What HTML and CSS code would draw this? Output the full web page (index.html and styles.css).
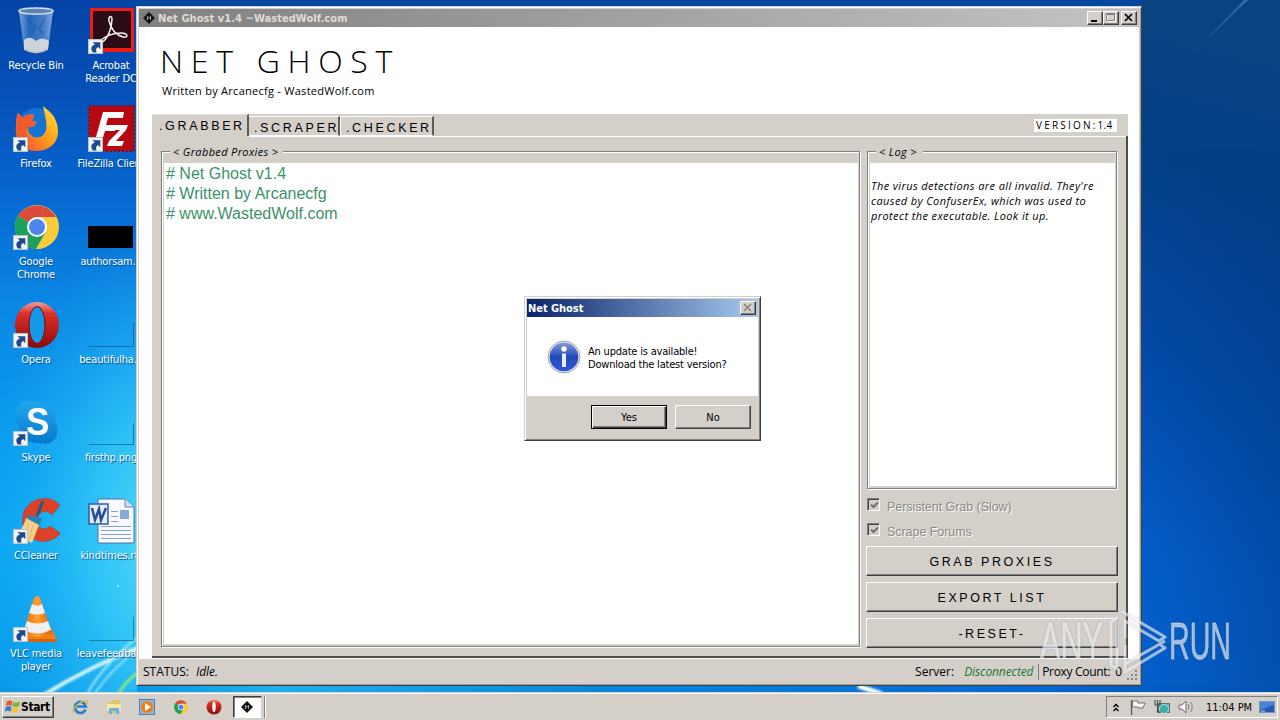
FILE: index.html
```html
<!DOCTYPE html>
<html lang="en">
<head>
<meta charset="utf-8">
<title>Net Ghost</title>
<link rel="stylesheet" href="styles.css">
</head>
<body>
<svg class="defs" width="0" height="0">
  <defs>
    <linearGradient id="red" x1="0" y1="0" x2="0" y2="1"><stop offset="0" stop-color="#f4a09a"/><stop offset=".25" stop-color="#dc3028"/><stop offset="1" stop-color="#8c0a08"/></linearGradient>
    <linearGradient id="fox" x1="1" y1="0" x2="0" y2="1"><stop offset="0" stop-color="#ffe838"/><stop offset=".5" stop-color="#ff9a18"/><stop offset="1" stop-color="#f0403c"/></linearGradient>
    <linearGradient id="sky" x1="0" y1="0" x2="0" y2="1"><stop offset="0" stop-color="#20a8ee"/><stop offset="1" stop-color="#0878cc"/></linearGradient>
    <linearGradient id="glass" x1="0" y1="0" x2="1" y2="0"><stop offset="0" stop-color="#a8c8ec" stop-opacity=".75"/><stop offset=".3" stop-color="#4080c8" stop-opacity=".55"/><stop offset=".75" stop-color="#78a4dc" stop-opacity=".6"/><stop offset="1" stop-color="#c0d8f0" stop-opacity=".7"/></linearGradient>
    <linearGradient id="info" x1="0" y1="0" x2="0" y2="1"><stop offset="0" stop-color="#7c98e0"/><stop offset=".5" stop-color="#2448b8"/><stop offset="1" stop-color="#2c58d8"/></linearGradient>
    <linearGradient id="cone" x1="0" y1="0" x2="1" y2="0"><stop offset="0" stop-color="#e86808"/><stop offset=".5" stop-color="#ffa030"/><stop offset="1" stop-color="#e06008"/></linearGradient>
    <symbol id="arrow" viewBox="0 0 14 14"><rect width="14" height="14" fill="#f4f4f4"/><rect x=".5" y=".5" width="13" height="13" fill="none" stroke="#b8c4cc"/><path d="M4 3H11.500V9.500L9.500 7.500C7.500 8.500 7 10 8 12.500H4.500C2 9 3 6.500 6.500 5.200Z" fill="#1c4a8c"/></symbol>
    <symbol id="chrome" viewBox="0 0 44 44"><circle cx="22" cy="22" r="22" fill="#fbcb3c"/><path d="M22 22L3 11A22 22 0 0 1 41 12H22Z" fill="#dc4a3c"/><path d="M3 11A22 22 0 0 0 21 44L31 27L22 22Z" fill="#1da05c"/><path d="M22 12H41A22 22 0 0 1 21 44L31 27Z" fill="#fbcb3c"/><circle cx="22" cy="22" r="10" fill="#fff"/><circle cx="22" cy="22" r="8" fill="#4c86ec"/></symbol>
    <symbol id="ghost" viewBox="0 0 12 12"><path d="M6 0L12 6L6 12L0 6Z" fill="#141414"/><path d="M4.500 4v4M4.500 6L7.500 5.500M7.500 4v4" stroke="#bbb" stroke-width=".8"/></symbol>
  </defs>
</svg>

<svg class="wallpaper" width="1280" height="720" viewBox="0 0 1280 720">
  <defs>
    <linearGradient id="wl" x1="0" y1="0" x2="0" y2="1"><stop offset="0" stop-color="#0544a6"/><stop offset=".13" stop-color="#0650b8"/><stop offset=".28" stop-color="#066ad2"/><stop offset=".42" stop-color="#0a86e4"/><stop offset=".58" stop-color="#0a9aee"/><stop offset=".75" stop-color="#0ca8f4"/><stop offset="1" stop-color="#0898e8"/></linearGradient>
    <radialGradient id="glow" gradientUnits="userSpaceOnUse" cx="170" cy="545" r="320" gradientTransform="translate(170 545) scale(.58 1) translate(-170 -545)"><stop offset="0" stop-color="#5ce0fa"/><stop offset=".45" stop-color="#38ccf8" stop-opacity=".7"/><stop offset="1" stop-color="#20a8f0" stop-opacity="0"/></radialGradient>
    <linearGradient id="wr" gradientUnits="userSpaceOnUse" x1="1275" y1="60" x2="1130" y2="640"><stop offset="0" stop-color="#0a4282"/><stop offset=".2" stop-color="#033e86"/><stop offset=".5" stop-color="#0249a4"/><stop offset=".85" stop-color="#035cc8"/><stop offset="1" stop-color="#0460cc"/></linearGradient>
    <linearGradient id="shade" x1="0" y1="0" x2="1" y2="0"><stop offset="0" stop-color="#003880" stop-opacity="0"/><stop offset="1" stop-color="#003880" stop-opacity=".4"/></linearGradient>
    <linearGradient id="base" x1="0" y1="0" x2="1" y2="0"><stop offset="0" stop-color="#0898e8"/><stop offset=".12" stop-color="#20b0ec"/><stop offset=".4" stop-color="#0888dc"/><stop offset=".8" stop-color="#0468d0"/><stop offset="1" stop-color="#0450b0"/></linearGradient>
    <linearGradient id="ray" x1="0" y1="1" x2="1" y2="0"><stop offset="0" stop-color="#6aa4d8" stop-opacity="0"/><stop offset="1" stop-color="#7ab0e0" stop-opacity=".4"/></linearGradient>
    <filter id="soft"><feGaussianBlur stdDeviation="1.200"/></filter>
  </defs>
  <rect width="1280" height="720" fill="#0470cc"/>
  <rect width="700" height="720" fill="url(#wl)"/>
  <rect width="400" height="720" fill="url(#glow)"/>
  <rect x="700" width="580" height="720" fill="url(#wr)"/>
  <rect x="1142" y="150" width="138" height="570" fill="url(#shade)"/>
  <rect x="136" width="1006" height="8" fill="#05489c"/>
  <rect x="137" y="684" width="1143" height="10" fill="url(#base)"/>
  <path d="M1184 62L1244 0h4Z" fill="url(#ray)"/>
  <g filter="url(#soft)" fill="none">
    <path d="M42 696Q90 666 150 643" stroke="#d4f6ff" stroke-width="4"/>
    <path d="M86 696Q105 660 150 628" stroke="#a8ecfc" stroke-width="2"/>
    <path d="M93 696Q112 667 150 640" stroke="#c0f2fc" stroke-width="1.500"/>
    <path d="M118 694Q126 680 142 670" stroke="#8ce888" stroke-width="3"/>
    <path d="M858 686L882 694" stroke="#fff" stroke-width="5"/>
  </g>
  <circle cx="118" cy="586" r="1" fill="#b8f4ff"/>
</svg>

<div class="shortcut s1 r1"><svg class="glyph" viewBox="0 0 48 48"><path d="M7 4L12 42Q24 49 36 42L41 4Z" fill="url(#glass)"/><path d="M12 33Q18 28 24 34Q30 29 37 34L36 42Q24 49 12 42Z" fill="#e8e4e0" opacity=".85"/><path d="M15 12L24 20L19 27M32 12L27 22L31 27" stroke="#1c5cae" stroke-width="2" fill="none" opacity=".6"/><ellipse cx="24" cy="4" rx="17" ry="3" fill="#5c84b0" stroke="#d4dce4" stroke-width="1.500"/><path d="M12 42Q24 49 36 42" stroke="#c0c0bc" stroke-width="2" fill="none"/></svg><span>Recycle Bin</span></div>
<div class="shortcut s2 r1"><svg class="glyph" viewBox="0 0 48 48"><rect x="3" y="1" width="44" height="44" fill="#ee1c12"/><rect x="6" y="4" width="38" height="37" fill="#2a0c14"/><path d="M14 36C20 33 25 22 25 12C25 8 21 9 22 14C24 22 29 28 36 30C42 31 41 26 34 26C26 26 19 29 14 33C11 36 12 38 14 36Z" fill="none" stroke="#f4f0ec" stroke-width="1.500"/></svg><svg class="badge" viewBox="0 0 14 14"><use href="#arrow"/></svg><span>Acrobat<br>Reader DC</span></div>
<div class="shortcut s1 r2"><svg class="glyph" viewBox="0 0 48 48"><circle cx="25" cy="22" r="19" fill="#1474d4"/><path d="M31 1C35 5 42 8 45 19C50 39 35 46 24 46C10 46 2 35 4 20C4 14 5 10 6 8L11 13C15 8 21 10 22 10L20 16L25 17L21 22H16C15 32 27 36 32 29C37 24 33 10 31 1Z" fill="url(#fox)"/><path d="M4 20L6 8L11 13C15 8 21 10 22 10L20 16L25 17L21 22H16L14 27L18 34L11 40C6 34 4 27 4 20Z" fill="#f25a2c"/></svg><svg class="badge" viewBox="0 0 14 14"><use href="#arrow"/></svg><span>Firefox</span></div>
<div class="shortcut s2 r2"><svg class="glyph" viewBox="0 0 48 48"><rect x="2" y="1" width="45" height="45" fill="#b80810" stroke="#84101c" stroke-width="2" stroke-dasharray="2 2"/><path d="M16 7H37L36 13H21L19 20H29L28 26H18L14 39H7ZM28 20H41L39 25L29 36H37L35 41H20L22 36L33 25H26Z" fill="#fff"/></svg><svg class="badge" viewBox="0 0 14 14"><use href="#arrow"/></svg><span>FileZilla Client</span></div>
<div class="shortcut s1 r3"><svg class="glyph" viewBox="0 0 48 48"><use href="#chrome" x="3" y="2" width="44" height="44"/></svg><svg class="badge" viewBox="0 0 14 14"><use href="#arrow"/></svg><span>Google<br>Chrome</span></div>
<div class="shortcut s2 r3"><svg class="glyph" viewBox="0 0 48 48"><rect x="1" y="23" width="45" height="22" fill="#000"/></svg><span>authorsam...</span></div>
<div class="shortcut s1 r4"><svg class="glyph" viewBox="0 0 48 48"><ellipse cx="25" cy="24" rx="22" ry="23" fill="url(#red)"/><ellipse cx="25" cy="24" rx="8" ry="18.500" fill="#1598e8" stroke="#7a0c0c" stroke-width="1"/></svg><svg class="badge" viewBox="0 0 14 14"><use href="#arrow"/></svg><span>Opera</span></div>
<div class="shortcut s2 r4"><svg class="glyph" viewBox="0 0 48 48"><path d="M2 45.500H46.500V22" fill="none" stroke="#0c6cb0"/></svg><span>beautifulha...</span></div>
<div class="shortcut s1 r5"><svg class="glyph" viewBox="0 0 48 48"><path d="M15 2C22 1 25 4 29 4C39 5 45 14 43 23C50 33 42 48 30 44C20 45 8 42 6 25C1 15 5 3 15 2Z" fill="url(#sky)"/><text x="14" y="36" class="skype-s" textLength="23" lengthAdjust="spacingAndGlyphs">S</text></svg><svg class="badge" viewBox="0 0 14 14"><use href="#arrow"/></svg><span>Skype</span></div>
<div class="shortcut s2 r5"><svg class="glyph" viewBox="0 0 48 48"><path d="M2 45.500H46.500V24" fill="none" stroke="#0c78a8"/></svg><span>firsthp.png</span></div>
<div class="shortcut s1 r6"><svg class="glyph" viewBox="0 0 48 48"><path d="M48 8C38-3 18 0 12 15C6 34 22 47 34 44C41 43 46 40 48 36L38 29C31 36 23 29 25 21C28 13 36 13 40 18Z" fill="#dc4228" stroke="#a83020" stroke-width=".5"/><path d="M31 4L25 19" stroke="#245a80" stroke-width="3"/><path d="M17 18L30 21L28 28L13 23Z" fill="#2880b4"/><path d="M14 21L27 28L20 46L2 38C8 35 12 29 14 21Z" fill="#f4d088"/><path d="M17 26L12 40M21 28L17 43" stroke="#e4b468"/></svg><svg class="badge" viewBox="0 0 14 14"><use href="#arrow"/></svg><span>CCleaner</span></div>
<div class="shortcut s2 r6"><svg class="glyph" viewBox="0 0 48 48"><path d="M11 2H38L47 10V46H11Z" fill="#f8faff" stroke="#5070a8"/><path d="M38 2V10H47" fill="#d0e0f4" stroke="#6080b8"/><path d="M14 29.500H44M14 33.500H44M14 37.500H44M14 41.500H44M24 14.500H31M24 19.500H31M24 24.500H31" stroke="#88a0d8"/><rect x="33" y="13" width="9" height="9" fill="#88a8d8"/><rect x="2" y="7" width="19" height="20" fill="#e4ecfc" stroke="#3058b0" stroke-width="1.500"/><path d="M5 11L8 23L12 12L14 23L19 11" fill="none" stroke="#284c9c" stroke-width="2.500"/></svg><span>kindtimes.rtf</span></div>
<div class="shortcut s1 r7"><svg class="glyph" viewBox="0 0 48 48"><path d="M12 32H39L45 46H8Z" fill="#f08018"/><path d="M8 44H45V47H8Z" fill="#d86008"/><path d="M22 3Q25 -1 28 3L40 38Q25 46 11 38Z" fill="url(#cone)"/><path d="M20 9Q25 12 30 9L33 18Q25 21 17 18Z" fill="#f0f0f0"/><path d="M15 26Q25 31 36 26L39 35Q25 42 12 35Z" fill="#f0f0f0"/></svg><svg class="badge" viewBox="0 0 14 14"><use href="#arrow"/></svg><span>VLC media<br>player</span></div>
<div class="shortcut s2 r7"><svg class="glyph" viewBox="0 0 48 48"><path d="M2 45.500H46.500V22" fill="none" stroke="#0c88b0"/></svg><span>leavefeedba...</span></div>

<main class="window">
  <header class="titlebar">
    <svg class="title-icon" viewBox="0 0 12 12"><use href="#ghost"/></svg>
    <span class="title">Net Ghost v1.4 ~WastedWolf.com</span>
    <span class="cap"><svg viewBox="0 0 14 12"><path d="M3 9h6" stroke="#000" stroke-width="2"/></svg></span>
    <span class="cap"><svg viewBox="0 0 14 12"><path d="M3.500 2.500h8v7h-8z" fill="none" stroke="#fff"/><path d="M2.500 1.500h8v7h-8zM2.500 2.500h8" fill="none" stroke="#808080"/></svg></span>
    <span class="cap close"><svg viewBox="0 0 14 12"><path d="M3 2L10 9M10 2L3 9" stroke="#000" stroke-width="1.700"/></svg></span>
  </header>
  <div class="client">
    <h1 class="brand">NET GHOST</h1>
    <p class="byline">Written by Arcanecfg - WastedWolf.com</p>
    <div class="tabs">
      <span class="tab selected">.GRABBER</span>
      <span class="tab">.SCRAPER</span>
      <span class="tab checker">.CHECKER</span>
      <span class="version">VERSION:<span class="num">1.4</span></span>
    </div>
    <div class="page">
      <fieldset class="group grabbed">
        <legend>&lt; Grabbed Proxies &gt;</legend>
        <div class="proxies"># Net Ghost v1.4<br># Written by Arcanecfg<br># www.WastedWolf.com</div>
      </fieldset>
      <aside class="side">
        <fieldset class="group log">
          <legend>&lt; Log &gt;</legend>
          <div class="logtext">The virus detections are all invalid. They're<br>caused by ConfuserEx, which was used to<br>protect the executable. Look it up.</div>
        </fieldset>
        <div class="check"><i class="box"><svg viewBox="0 0 9 9"><path d="M1 3.500L3.500 6L8 1.500" fill="none" stroke="#707070" stroke-width="2"/></svg></i><span>Persistent Grab (Slow)</span></div>
        <div class="check"><i class="box"><svg viewBox="0 0 9 9"><path d="M1 3.500L3.500 6L8 1.500" fill="none" stroke="#707070" stroke-width="2"/></svg></i><span>Scrape Forums</span></div>
        <div class="actions"><button>GRAB PROXIES</button><button>EXPORT LIST</button><button>-RESET-</button></div>
      </aside>
    </div>
  </div>
  <footer class="status">
    <span>STATUS:</span><em class="idle">Idle.</em>
    <span>Server:</span><em class="disc">Disconnected</em>
    <span class="count">Proxy Count:</span><span class="zero">0</span>
    <svg class="grip" viewBox="0 0 12 12"><path d="M9 1h2v2h-2zM5 5h2v2h-2zM9 5h2v2h-2zM1 9h2v2h-2zM5 9h2v2h-2zM9 9h2v2h-2z" fill="#888480"/></svg>
  </footer>
</main>

<section class="dialog">
  <header class="dlg-title"><span>Net Ghost</span><i class="cap dlg-close"><svg viewBox="0 0 14 12"><path d="M3 2L10 9M10 2L3 9" stroke="#84807c" stroke-width="1.500"/></svg></i></header>
  <div class="dlg-body">
    <svg class="info" viewBox="0 0 34 34"><circle cx="17" cy="17" r="16" fill="#dcdce0" stroke="#9898a0" stroke-width=".8"/><circle cx="17" cy="17" r="14.300" fill="url(#info)"/><circle cx="17" cy="9" r="2.700" fill="#fff"/><rect x="15" y="13.500" width="4" height="13.500" fill="#e8ecf4"/></svg>
    <div class="message">An update is available!<br>Download the latest version?</div>
  </div>
  <div class="dlg-foot"><button class="dbtn default">Yes</button><button class="dbtn">No</button></div>
</section>

<nav class="taskbar">
  <div class="start"><svg viewBox="0 0 18 16"><path d="M3 2Q6 0 9 2L8 7Q5 5 2 7Z" fill="#e85c28"/><path d="M10 2.500Q13 4 17 2L16 7Q12 9 9 7Z" fill="#7cb83c"/><path d="M2 8Q5 6 8 8L7 13Q4 11 .5 13Z" fill="#3c7cc8"/><path d="M9 8.500Q12 10 15.500 8L14 13Q11 15 8 13Z" fill="#f4c430"/></svg><b>Start</b></div>
  <div class="quick">
    <svg viewBox="0 0 16 16"><path d="M13.500 10.500A5.500 5.500 0 1 1 13.800 7.500H4.500" fill="none" stroke="#2480d0" stroke-width="2.700"/><path d="M1 14C-1 9 13-1 15 2C16 3 15 5 14 6" fill="none" stroke="#e8b830" stroke-width="1.300"/></svg>
    <svg viewBox="0 0 16 16"><path d="M1 3H6L7 1H14V14H1Z" fill="#e4c468"/><path d="M1 5H15V12H1Z" fill="#fae8a0"/><path d="M3 15V9H13V15H10V12H6V15Z" fill="#68b4dc"/></svg>
    <svg viewBox="0 0 16 16"><rect x=".5" y=".5" width="15" height="15" fill="#90b8dc" stroke="#4880b8"/><circle cx="8" cy="8" r="6" fill="#f07c10"/><path d="M6 4L12 8L6 12Z" fill="#fff"/></svg>
    <svg viewBox="0 0 16 16"><use href="#chrome" x="1" y="1" width="14" height="14"/></svg>
    <svg viewBox="0 0 16 16"><circle cx="8" cy="8" r="7.500" fill="url(#red)"/><ellipse cx="8" cy="8" rx="1.700" ry="5.200" fill="#fff"/></svg>
  </div>
  <div class="task"><svg viewBox="0 0 12 12"><use href="#ghost"/></svg></div>
  <div class="tray">
    <svg class="chev" viewBox="0 0 6 9"><path d="M.5 4L3 1.500L5.500 4M.5 8L3 5.500L5.500 8" fill="none" stroke="#000" stroke-width="1.400"/></svg>
    <svg class="flag" viewBox="0 0 16 16"><path d="M1.500 1V16" stroke="#606060" stroke-width="1.400"/><path d="M2.500 2H8V4H15L13 9H8V8H2.500Z" fill="#f8f8f8" stroke="#707070"/></svg>
    <svg class="net" viewBox="0 0 16 16"><rect x="4.500" y="4.500" width="11" height="9" fill="#6cb0c0" stroke="#607070"/><circle cx="10" cy="10" r="4.500" fill="#38b0a8" stroke="#d0f0ec" stroke-width=".7"/><path d="M1 1V6H6V1M3.500 1V13H7" fill="none" stroke="#505050" stroke-width="1.200"/></svg>
    <svg class="sound" viewBox="0 0 16 16"><path d="M1 6H4L8 2V14L4 10H1Z" fill="#f4f4f4" stroke="#707070"/><path d="M10 5Q12 8 10 11M12.500 3Q16 8 12.500 13" fill="none" stroke="#808080"/></svg>
    <span class="clock">11:04 PM</span>
    <svg class="desk" viewBox="0 0 16 12"><rect x=".5" y=".5" width="15" height="11" fill="#2858ac" stroke="#7898c4"/><path d="M1 9L15 4V1H1Z" fill="#4884d8"/><path d="M2 10h4" stroke="#d0e0f0"/></svg>
  </div>
</nav>

<svg class="watermark" width="200" height="70" viewBox="0 0 200 70">
  <text class="mark" x="3" y="49" textLength="63" lengthAdjust="spacingAndGlyphs">ANY</text>
  <text class="mark" x="132" y="49" textLength="62" lengthAdjust="spacingAndGlyphs">RUN</text>
  <g fill="none" stroke="#fff" stroke-opacity=".6" stroke-width="3" stroke-linejoin="round"><path d="M80 8V59L74 55V12Z"/><path d="M84 1L128 27L122 31L88 11V28"/><path d="M88 35V54L128 31M88 49V62L128 38L122 34"/></g>
</svg>
</body>
</html>
```
FILE: styles.css
```css
* { box-sizing: border-box; }
:root { --face: #d4cfc9; }
body { margin: 0; width: 1280px; height: 720px; overflow: hidden; position: relative; font: 11px/13px "DejaVu Sans Condensed", "DejaVu Sans", sans-serif; font-stretch: condensed; color: #000; }
svg { display: block; }
.defs { position: absolute; }
.wallpaper { position: absolute; left: 0; top: 0; }

/* Desktop shortcuts on a free canvas */
.shortcut { position: absolute; width: 96px; display: flex; flex-direction: column; align-items: center; gap: 4px; color: #fff; text-align: center; text-shadow: 1px 1px 1px #024a90; white-space: nowrap; letter-spacing: -.15px; }
.s1 { left: -12px; }
.s2 { left: 63px; }
.r1 { top: 7px; } .r2 { top: 105px; } .r3 { top: 203px; } .r4 { top: 301px; } .r5 { top: 399px; } .r6 { top: 497px; } .r7 { top: 595px; }
.glyph { width: 48px; height: 48px; }
.badge { position: absolute; left: 25px; top: 32px; width: 15px; height: 15px; }
.skype-s { font: bold 38px "Liberation Sans", sans-serif; fill: #fff; text-shadow: none; }

/* Main window */
.window { position: absolute; left: 136px; top: 6px; width: 1006px; height: 680px; padding: 2px; background: var(--face); border: 1px solid; border-color: var(--face) #404040 #404040 var(--face); box-shadow: inset 1px 1px #fff, inset -1px -1px #a09c94; display: flex; flex-direction: column; }
.titlebar { height: 18px; flex: none; display: flex; align-items: center; background: linear-gradient(90deg, #808080, #c4c4c4); padding: 0 2px 0 4px; }
.title-icon { width: 12px; height: 12px; margin-right: 3px; }
.title { font-weight: bold; color: #e0dcd4; flex: 1; letter-spacing: .06px; white-space: nowrap; }
.cap { width: 16px; height: 14px; background: var(--face); border: 1px solid; border-color: #fff #404040 #404040 #fff; box-shadow: inset -1px -1px #808080; }
.cap svg { width: 14px; height: 12px; }
.close { margin-left: 2px; }
.client { background: #fff; height: 632px; flex: none; padding: 19px 11px 0 13px; display: flex; flex-direction: column; }
.brand { margin: -1px 0 0 8px; height: 33px; font: 300 32px/32px "Open Sans", sans-serif; letter-spacing: 7.7px; white-space: nowrap; }
.byline { margin: 6px 0 0 10px; height: 13px; font: 11px/13px "Open Sans", sans-serif; white-space: nowrap; letter-spacing: .27px; }
.tabs { margin-top: 17px; height: 22px; background: var(--face); display: flex; align-items: flex-end; flex: none; font: 12.5px/18px "Liberation Sans", sans-serif; letter-spacing: 2.65px; white-space: nowrap; }
.tab { width: 91px; height: 20px; padding: 2px 0 0 4px; border-top: 1px solid #fff; border-left: 1px solid #fff; border-right: 2px solid #605c58; border-bottom: 1px solid #fff; overflow: hidden; }
.tab.selected { width: 97px; height: 22px; padding: 2px 0 0 7px; border-left: 0; border-bottom: 0; border-top-color: #e0dcd8; }
.tab.selected + .tab { border-left: 0; padding-left: 5px; }
.tab.checker { width: 94px; padding-left: 5px; }
.version { margin: 0 11px 4px auto; width: 83px; height: 13px; padding-left: 2px; background: #fff; font: 10px/13px "Open Sans", sans-serif; letter-spacing: 2.2px; overflow: hidden; }
.num { letter-spacing: .3px; }
.page { height: 522px; width: 976px; background: var(--face); border-right: 2px solid #504c48; border-bottom: 2px solid #504c48; padding: 15px 0 0 9px; display: flex; gap: 7px; background-image: linear-gradient(#fff, #fff); background-size: 878px 1px; background-repeat: no-repeat; background-position: 97px 0; }
.group { position: relative; margin: 0; padding: 11px 1px 1px 2px; min-width: 0; border: 1px solid #808080; box-shadow: 1px 1px #fff, inset 1px 1px #fff; }
.group legend { position: absolute; left: 8px; top: -8px; padding: 0 3px; background: var(--face); font: italic 11px/15px "Open Sans", sans-serif; white-space: nowrap; letter-spacing: .35px; }
.grabbed { width: 699px; height: 496px; }
.grabbed legend { width: 113px; }
.proxies { height: 481px; background: #fff; color: #3a9268; font: 16px/20px "Liberation Sans", sans-serif; padding: 1px 0 0 2px; white-space: nowrap; }
.side { width: 250px; }
.log { height: 338px; }
.log legend { width: 47px; }
.logtext { height: 323px; background: #fff; padding: 15px 0 0 1px; font: italic 11px/15px "Open Sans", sans-serif; white-space: nowrap; letter-spacing: .4px; }
.check { display: flex; height: 25px; color: #8c8884; text-shadow: 1px 1px #fff; font: 12.5px/16px "Liberation Sans", sans-serif; gap: 7px; white-space: nowrap; letter-spacing: -.05px; }
.log + .check { margin-top: 9px; }
.check span { padding-top: 1px; }
.box { width: 13px; height: 13px; background: var(--face); border: 1px solid; border-color: #808080 #fff #fff #808080; box-shadow: inset 1px 1px #404040; padding: 2px 1px 1px 2px; }
.box svg { width: 9px; height: 9px; }
.actions { display: flex; flex-direction: column; gap: 6px; margin: -2px -1px 0; }
.actions button { height: 30px; width: 252px; padding: 2px 0 0; background: var(--face); border: 1px solid; border-color: #fff #404040 #404040 #fff; box-shadow: inset -1px -1px #808080; font: 12.5px/16px "Liberation Sans", sans-serif; letter-spacing: 2.55px; color: #000; }
.status { flex: 1; margin-top: 1px; display: flex; align-items: center; padding: 0 1px 0 4px; font: 12px/16px "Open Sans", sans-serif; white-space: nowrap; }
.idle { margin-left: 7px; flex: 1; }
.disc { color: #1a7838; margin-left: 10px; width: 69px; letter-spacing: -.1px; }
.count { border-left: 1px solid #808080; padding-left: 3px; margin-left: 5px; width: 73px; letter-spacing: -.3px; }
.zero { margin-left: 4px; }
.grip { width: 12px; height: 12px; margin: 7px 0 0 4px; }

/* Message box lies over the window */
.dialog { position: absolute; left: 524px; top: 296px; width: 237px; height: 145px; background: var(--face); border: 1px solid; border-color: var(--face) #404040 #404040 var(--face); box-shadow: inset 1px 1px #fff, inset -1px -1px #808080; padding: 2px; }
.dlg-title { height: 18px; display: flex; align-items: center; justify-content: space-between; padding: 0 2px 0 1px; background: linear-gradient(90deg, #0a246a, #a6caf0); color: #fff; font-weight: bold; letter-spacing: -.05px; }
.dlg-body { height: 79px; background: #fff; display: flex; padding: 23px 0 0 20px; gap: 7px; white-space: nowrap; }
.info { width: 34px; height: 34px; }
.message { padding-top: 5px; letter-spacing: -.2px; }
.dlg-foot { display: flex; gap: 8px; padding: 9px 0 0 64px; }
.dbtn { width: 76px; height: 24px; padding: 0; font: inherit; background: var(--face); border: 1px solid; border-color: #fff #404040 #404040 #fff; box-shadow: inset -1px -1px #808080; color: #000; }
.dbtn.default { border-color: #000; box-shadow: inset 1px 1px #fff, inset -1px -1px #404040, inset -2px -2px #808080; }

/* Taskbar */
.taskbar { position: absolute; left: 0; top: 692px; width: 1280px; height: 28px; background: var(--face); box-shadow: inset 0 1px var(--face), inset 0 2px #fff; display: flex; padding: 4px 2px 2px; }
.start { width: 52px; height: 22px; display: flex; align-items: center; border: 1px solid; border-color: #fff #404040 #404040 #fff; box-shadow: inset -1px -1px #808080; padding-left: 1px; font-size: 12px; letter-spacing: -.4px; }
.start svg { width: 17px; height: 16px; }
.quick { display: flex; gap: 17.5px; padding: 3px 0 0 18px; width: 178px; }
.quick svg { width: 16px; height: 16px; flex: none; }
.task { width: 29px; height: 22px; background: #fff; border: 1px solid; border-color: #404040 #d4d0c8 #fff #404040; box-shadow: inset 1px 1px #808080, 2px 0 var(--face), 3px 0 #808080, 4px 0 #fff; padding: 4px 0 0 7px; margin-left: 1px; }
.task svg { width: 12px; height: 12px; }
.tray { margin-left: auto; width: 172px; height: 22px; border: 1px solid; border-color: #808080 #fff #fff #808080; display: flex; align-items: center; padding: 0 2px 0 6px; white-space: nowrap; }
.chev { width: 6px; height: 9px; }
.flag { width: 16px; height: 16px; margin-left: 11px; }
.net { width: 16px; height: 16px; margin-left: 8px; }
.sound { width: 16px; height: 16px; margin-left: 8px; }
.clock { margin-left: 12px; width: 46px; }
.desk { width: 16px; height: 12px; margin-left: auto; }

.watermark { position: absolute; left: 1037px; top: 610px; filter: drop-shadow(0 0 1px rgba(70, 90, 120, .45)); }
.mark { font: 52px "Liberation Sans", sans-serif; fill: #fff; fill-opacity: .6; stroke: #fff; stroke-opacity: .4; stroke-width: .8px; }
```
